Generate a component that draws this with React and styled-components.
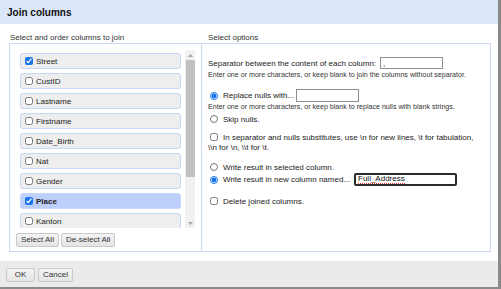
import styled, { createGlobalStyle } from "styled-components";

const GlobalStyle = createGlobalStyle`
  html, body {
    margin: 0;
    padding: 0;
    background: #8a8a8a;
  }
  body {
    font-family: "Liberation Sans", Arial, sans-serif;
    color: #333;
  }
`;

const Dialog = styled.div`
  width: 498px;
  height: 287px;
  background: #fff;
  display: flex;
  flex-direction: column;
`;

const Header = styled.div`
  height: 24px;
  flex: none;
  display: flex;
  align-items: center;
  padding-left: 7px;
  background: #dbe6f8;
  font-size: 10px;
  font-weight: bold;
  color: #111;
`;

const Body = styled.div`
  flex: 1;
  display: grid;
  grid-template-columns: 193px 289px;
  padding: 9px 0 0 9px;
`;

const Column = styled.div`
  display: flex;
  flex-direction: column;
`;

const Label = styled.div`
  height: 10px;
  line-height: 10px;
  font-size: 8px;
  color: #333;
  padding-left: ${(p) => p.$indent}px;
`;

const Panel = styled.div`
  height: 209px;
  box-sizing: border-box;
  border: 1px solid #cbd9f3;
  border-left-width: ${(p) => (p.$joined ? 0 : 1)}px;
  padding: ${(p) => (p.$joined ? "0 6px 0 6px" : "6px 6px 4px 6px")};
  display: flex;
  flex-direction: column;
`;

const ListArea = styled.div`
  display: flex;
  height: 178px;
  margin-left: 4px;
  gap: 4px;
`;

const List = styled.div`
  width: 161px;
  overflow: hidden;
  padding-top: 3px;
  display: flex;
  flex-direction: column;
  gap: 4px;
`;

const Item = styled.label`
  flex: none;
  height: 16px;
  box-sizing: border-box;
  display: flex;
  align-items: center;
  gap: 2px;
  padding-left: 4px;
  border: 1px solid #c6d6f6;
  border-radius: 3px;
  background: ${(p) => (p.$selected ? "#bdcffb" : "#eeeeee")};
  font-size: 8px;
  font-weight: ${(p) => (p.$selected ? "bold" : "normal")};
  color: #222;
`;

const Check = styled.input.attrs({ type: "checkbox" })`
  width: 8px;
  height: 8px;
  margin: 0 ${(p) => p.$gap || 0}px 0 ${(p) => p.$left || 0}px;
  accent-color: #1a73e8;
  flex: none;
`;

const Radio = styled.input.attrs({ type: "radio" })`
  width: 8px;
  height: 8px;
  margin: 0 5px 0 2px;
  accent-color: #1a73e8;
  flex: none;
`;

const ScrollBar = styled.div`
  width: 10px;
  display: flex;
  flex-direction: column;
  background: #f1f1f1;
`;

const ScrollButton = styled.div`
  height: 10px;
  flex: none;
  display: flex;
  align-items: center;
  justify-content: center;
`;

const ScrollTrack = styled.div`
  flex: 1;
`;

const Thumb = styled.div`
  height: 117px;
  margin-left: 1px;
  background: #c1c1c1;
`;

const ButtonRow = styled.div`
  display: flex;
  gap: 2px;
  margin-top: 5px;
`;

const Button = styled.button`
  height: 14px;
  min-width: 29px;
  padding: 0 4px;
  box-sizing: border-box;
  border: 1px solid #c9c9c9;
  border-radius: 2px;
  background: linear-gradient(#f4f4f4, #e4e4e4);
  font-family: inherit;
  font-size: 8px;
  color: #333;
  line-height: 12px;
`;

const Row = styled.div`
  display: flex;
  align-items: center;
  height: ${(p) => p.$h}px;
  margin-top: ${(p) => p.$mt}px;
  font-size: 8px;
  color: #222;
  white-space: nowrap;
`;

const Hint = styled.div`
  height: 10px;
  line-height: 10px;
  margin-top: ${(p) => p.$mt || 0}px;
  font-size: 7.1px;
  color: #333;
  white-space: nowrap;
`;

const Para = styled.div`
  margin-top: ${(p) => p.$mt}px;
  line-height: 10px;
  font-size: 8px;
  color: #222;
  & input {
    vertical-align: -1px;
  }
`;

const TextBox = styled.input`
  box-sizing: border-box;
  width: ${(p) => p.$w}px;
  height: ${(p) => p.$h}px;
  margin-left: ${(p) => p.$ml}px;
  padding: 0 2px;
  border: 1px solid #8f8f8f;
  outline: none;
  background: #fff;
  font-family: inherit;
  font-size: 8px;
  color: #111;
`;

const FocusedBox = styled.div`
  box-sizing: border-box;
  width: ${(p) => p.$w}px;
  height: ${(p) => p.$h}px;
  margin-left: ${(p) => p.$ml}px;
  padding: 0 2px;
  display: flex;
  align-items: center;
  border: 2px solid #2b2b2b;
  border-radius: 2px;
  background: #fff;
  font-size: 8px;
  color: #111;
`;

const Misspelled = styled.span`
  line-height: 8px;
  border-bottom: 1px dotted #e0322f;
`;

const Footer = styled.div`
  height: 26px;
  flex: none;
  box-sizing: border-box;
  padding: 7px 0 0 6px;
  display: flex;
  align-items: flex-start;
  gap: 3px;
  background: #ebebeb;
`;

const columns = [
  { name: "Street", checked: true },
  { name: "CustID" },
  { name: "Lastname" },
  { name: "Firstname" },
  { name: "Date_Birth" },
  { name: "Nat" },
  { name: "Gender" },
  { name: "Place", checked: true, selected: true },
  { name: "Kanton" },
];

function Arrow({ down }) {
  return (
    <svg width="5" height="3" viewBox="0 0 5 3">
      <path d={down ? "M0 0H5L2.5 3Z" : "M0 3H5L2.5 0Z"} fill="#a3a3a3" />
    </svg>
  );
}

export default function App() {
  return (
    <>
      <GlobalStyle />
      <Dialog>
        <Header>Join columns</Header>
        <Body>
          <Column>
            <Label $indent={1}>Select and order columns to join</Label>
            <Panel>
              <ListArea>
                <List>
                  {columns.map((c) => (
                    <Item key={c.name} $selected={c.selected}>
                      <Check defaultChecked={c.checked} $left={0} $gap={1} />
                      {c.name}
                    </Item>
                  ))}
                </List>
                <ScrollBar>
                  <ScrollButton>
                    <Arrow />
                  </ScrollButton>
                  <ScrollTrack>
                    <Thumb />
                  </ScrollTrack>
                  <ScrollButton>
                    <Arrow down />
                  </ScrollButton>
                </ScrollBar>
              </ListArea>
              <ButtonRow>
                <Button>Select All</Button>
                <Button>De-select All</Button>
              </ButtonRow>
            </Panel>
          </Column>
          <Column>
            <Label $indent={6}>Select options</Label>
            <Panel $joined>
              <Row $h={12} $mt={13}>
                Separator between the content of each column:
                <TextBox $w={63} $h={12} $ml={4} defaultValue="," />
              </Row>
              <Hint $mt={1}>
                Enter one or more characters, or keep blank to join the columns
                without separator.
              </Hint>
              <Row $h={13} $mt={9}>
                <Radio name="nulls" defaultChecked />
                Replace nulls with...
                <TextBox $w={63} $h={13} $ml={2} />
              </Row>
              <Hint>
                Enter one or more characters, or keep blank to replace nulls
                with blank strings.
              </Hint>
              <Row $h={12} $mt={1}>
                <Radio name="nulls" />
                Skip nulls.
              </Row>
              <Para $mt={8}>
                <Check $left={2} $gap={5} />
                In separator and nulls substitutes, use \n for new lines, \t for
                tabulation, \\n for \n, \\t for \t.
              </Para>
              <Row $h={10} $mt={9}>
                <Radio name="target" />
                Write result in selected column.
              </Row>
              <Row $h={13} $mt={1}>
                <Radio name="target" defaultChecked />
                Write result in new column named...
                <FocusedBox $w={103} $h={13} $ml={4}>
                  <Misspelled>Full_Address</Misspelled>
                </FocusedBox>
              </Row>
              <Row $h={10} $mt={10}>
                <Check $left={2} $gap={5} />
                Delete joined columns.
              </Row>
            </Panel>
          </Column>
        </Body>
        <Footer>
          <Button>OK</Button>
          <Button>Cancel</Button>
        </Footer>
      </Dialog>
    </>
  );
}
